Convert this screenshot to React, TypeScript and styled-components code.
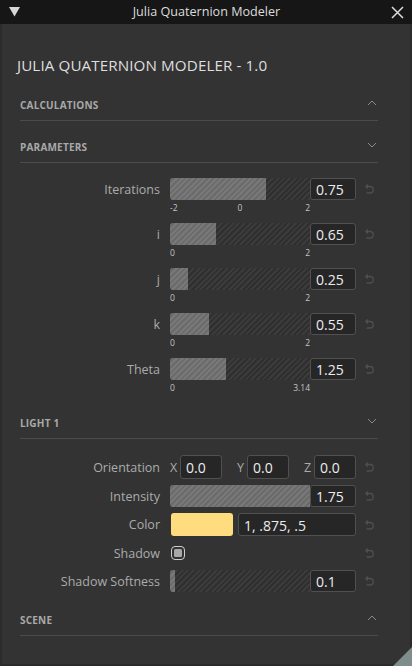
import React from "react";
import styled, { createGlobalStyle } from "styled-components";

const GlobalStyle = createGlobalStyle`
  html, body { margin: 0; padding: 0; background: #333; }
  body { font-family: "Open Sans", "Noto Sans", sans-serif; }
  * { box-sizing: border-box; }
`;

const Window = styled.div`
  width: 412px;
  height: 666px;
  display: flex;
  flex-direction: column;
  position: relative;
  overflow: hidden;
`;

const TitleBar = styled.div`
  height: 24px;
  flex: none;
  background: #161616;
  display: grid;
  grid-template-columns: 1fr auto 1fr;
  align-items: center;
  padding: 0 8px 0 9px;
`;

const Title = styled.div`
  color: #dcdcdc;
  font-size: 12.6px;
  line-height: 24px;
`;

const TitleIcon = styled.svg<{ $end?: boolean }>`
  display: block;
  justify-self: ${(p) => (p.$end ? "end" : "start")};
`;

const Body = styled.div`
  flex: 1;
  background: #333;
  border: 2px solid #2b2b2b;
  border-top: none;
  padding: 31px 32px 0 18px;
`;

const Heading = styled.h1`
  margin: 0 0 4px -3px;
  font-size: 15.2px;
  line-height: 20px;
  font-weight: 400;
  color: #dedede;
  letter-spacing: 0.1px;
`;

const SectionHeader = styled.div`
  height: 42px;
  padding-top: 19px;
  border-bottom: 1px solid #4b4b4b;
  display: flex;
  justify-content: space-between;
  align-items: flex-start;
`;

const SectionTitle = styled.span`
  font-size: 10px;
  line-height: 14px;
  font-weight: 700;
  color: #a9a9a9;
  letter-spacing: 0.2px;
`;

const ChevronIcon = styled.svg`
  display: block;
  margin: 2px 1px 0 0;
`;

const SectionBody = styled.div<{ $top: number; $bottom: number; $gap: number }>`
  display: flex;
  flex-direction: column;
  gap: ${(p) => p.$gap}px;
  padding: ${(p) => p.$top}px 0 ${(p) => p.$bottom}px;
`;

const Row = styled.div<{ $h: number }>`
  display: grid;
  grid-template-columns: 142px 186px 14px;
  column-gap: 8px;
  align-items: center;
  height: ${(p) => p.$h}px;
`;

const ParamRow = styled.div`
  display: grid;
  grid-template-columns: 142px 186px 14px;
  grid-template-rows: 22px 16px;
  column-gap: 8px;
  align-items: center;
`;

const Label = styled.span`
  text-align: right;
  padding-right: 2px;
  font-size: 12.5px;
  color: #ababab;
  white-space: nowrap;
`;

const Control = styled.div`
  display: flex;
  align-items: center;
  height: 100%;
`;

const Track = styled.div`
  width: 140px;
  height: 22px;
  flex: none;
  display: flex;
  border-radius: 3px 0 0 3px;
  overflow: hidden;
  background: repeating-linear-gradient(
    135deg,
    #3b3b3b 0px,
    #3b3b3b 2px,
    #2f2f2f 2px,
    #2f2f2f 4px
  );
`;

const Fill = styled.div`
  height: 100%;
  background: repeating-linear-gradient(
    135deg,
    #787878 0px,
    #787878 2px,
    #6b6b6b 2px,
    #6b6b6b 4px
  );
`;

const ValueBox = styled.input<{ $w: number; $h: number }>`
  width: ${(p) => p.$w}px;
  height: ${(p) => p.$h}px;
  flex: none;
  background: #262626;
  border: 1px solid #505050;
  border-radius: 3px;
  color: #ececec;
  font-family: "Open Sans", "Noto Sans", sans-serif;
  font-size: 14px;
  padding: 1px 0 0 5px;
  outline: none;
`;

const Ticks = styled.div`
  grid-column: 2;
  grid-row: 2;
  position: relative;
  width: 140px;
  height: 16px;
`;

const Tick = styled.span`
  position: absolute;
  top: 3px;
  font-size: 8.5px;
  line-height: 10px;
  color: #c4c4c4;
  white-space: nowrap;
`;

const ResetIcon = styled.svg`
  display: block;
  grid-column: 3;
  grid-row: 1;
`;

const AxisGroups = styled.div`
  display: flex;
  justify-content: space-between;
  width: 186px;
  height: 100%;
`;

const AxisGroup = styled.div`
  display: flex;
  align-items: center;
  height: 100%;
`;

const AxisLetter = styled.span`
  width: 10px;
  font-size: 12.5px;
  color: #ababab;
`;

const Swatch = styled.div<{ $color: string }>`
  width: 62px;
  height: 23px;
  margin: 0 5px 0 1px;
  border-radius: 3px;
  background: ${(p) => p.$color};
`;

const Checkbox = styled.div`
  width: 14px;
  height: 14px;
  margin-left: 1px;
  border: 1.5px solid #cfcfcf;
  border-radius: 4px;
  display: flex;
  align-items: center;
  justify-content: center;
  &::after {
    content: "";
    width: 8px;
    height: 8px;
    border-radius: 1.5px;
    background: #a9a9a9;
  }
`;

const Grip = styled.svg`
  position: absolute;
  right: 0;
  bottom: 0;
  display: block;
`;

const Chevron = ({ up }: { up: boolean }) => (
  <ChevronIcon width="10" height="6" viewBox="0 0 10 6">
    <path
      d={up ? "M1 5 L5 1 L9 5" : "M1 1 L5 5 L9 1"}
      fill="none"
      stroke="#8a8a8a"
      strokeWidth="1"
    />
  </ChevronIcon>
);

const Reset = () => (
  <ResetIcon width="11" height="12" viewBox="0 0 11 12">
    <path
      d="M2 3.5 H6 A3.25 3.25 0 0 1 6 10 H2.5 M3.8 1.5 L1.8 3.5 L3.8 5.5"
      fill="none"
      stroke="#4f4f4f"
      strokeWidth="1.3"
    />
  </ResetIcon>
);

const Section = ({
  title,
  up,
  children,
}: {
  title: string;
  up: boolean;
  children?: React.ReactNode;
}) => (
  <>
    <SectionHeader>
      <SectionTitle>{title}</SectionTitle>
      <Chevron up={up} />
    </SectionHeader>
    {children}
  </>
);

type Param = { label: string; value: number; min: number; max: number; ticks: string[] };

const params: Param[] = [
  { label: "Iterations", value: 0.75, min: -2, max: 2, ticks: ["-2", "0", "2"] },
  { label: "i", value: 0.65, min: 0, max: 2, ticks: ["0", "2"] },
  { label: "j", value: 0.25, min: 0, max: 2, ticks: ["0", "2"] },
  { label: "k", value: 0.55, min: 0, max: 2, ticks: ["0", "2"] },
  { label: "Theta", value: 1.25, min: 0, max: 3.14, ticks: ["0", "3.14"] },
];

const Slider = ({ pct }: { pct: number }) => (
  <Track>
    <Fill style={{ width: `${pct}%` }} />
  </Track>
);

const ParamSlider = ({ p }: { p: Param }) => {
  const pct = ((p.value - p.min) / (p.max - p.min)) * 100;
  return (
    <ParamRow>
      <Label>{p.label}</Label>
      <Control>
        <Slider pct={pct} />
        <ValueBox $w={46} $h={22} readOnly value={String(p.value)} />
      </Control>
      <Reset />
      <Ticks>
        {p.ticks.map((t) => {
          const tp = ((parseFloat(t) - p.min) / (p.max - p.min)) * 100;
          return (
            <Tick
              key={t}
              style={{ left: `${tp}%`, transform: `translateX(-${tp}%)` }}
            >
              {t}
            </Tick>
          );
        })}
      </Ticks>
    </ParamRow>
  );
};

export default function App() {
  return (
    <>
      <GlobalStyle />
      <Window>
        <TitleBar>
          <TitleIcon width="11" height="10" viewBox="0 0 11 10">
            <path d="M0 0 H11 L5.5 9.5 Z" fill="#d6d6d6" />
          </TitleIcon>
          <Title>Julia Quaternion Modeler</Title>
          <TitleIcon $end width="13" height="13" viewBox="0 0 13 13">
            <path d="M1 1 L12 12 M12 1 L1 12" stroke="#dcdcdc" strokeWidth="1.5" />
          </TitleIcon>
        </TitleBar>
        <Body>
          <Heading>JULIA QUATERNION MODELER - 1.0</Heading>
          <Section title="CALCULATIONS" up />
          <Section title="PARAMETERS" up={false}>
            <SectionBody $top={15} $bottom={1} $gap={7}>
              {params.map((p) => (
                <ParamSlider key={p.label} p={p} />
              ))}
            </SectionBody>
          </Section>
          <Section title="LIGHT 1" up={false}>
            <SectionBody $top={16} $bottom={2} $gap={6}>
              <Row $h={24}>
                <Label>Orientation</Label>
                <AxisGroups>
                  {["X", "Y", "Z"].map((a) => (
                    <AxisGroup key={a}>
                      <AxisLetter>{a}</AxisLetter>
                      <ValueBox $w={42} $h={24} readOnly value="0.0" />
                    </AxisGroup>
                  ))}
                </AxisGroups>
                <Reset />
              </Row>
              <Row $h={22}>
                <Label>Intensity</Label>
                <Control>
                  <Slider pct={100} />
                  <ValueBox $w={46} $h={22} readOnly value="1.75" />
                </Control>
                <Reset />
              </Row>
              <Row $h={23}>
                <Label>Color</Label>
                <Control>
                  <Swatch $color="#ffdc7e" />
                  <ValueBox $w={118} $h={23} readOnly value="1, .875, .5" />
                </Control>
                <Reset />
              </Row>
              <Row $h={22}>
                <Label>Shadow</Label>
                <Control>
                  <Checkbox />
                </Control>
                <Reset />
              </Row>
              <Row $h={22}>
                <Label>Shadow Softness</Label>
                <Control>
                  <Slider pct={3.5} />
                  <ValueBox $w={46} $h={22} readOnly value="0.1" />
                </Control>
                <Reset />
              </Row>
            </SectionBody>
          </Section>
          <Section title="SCENE" up />
        </Body>
        <Grip width="19" height="19" viewBox="0 0 19 19">
          <path d="M19 0 L19 19 L0 19 Z" fill="#7e8c8c" />
        </Grip>
      </Window>
    </>
  );
}
